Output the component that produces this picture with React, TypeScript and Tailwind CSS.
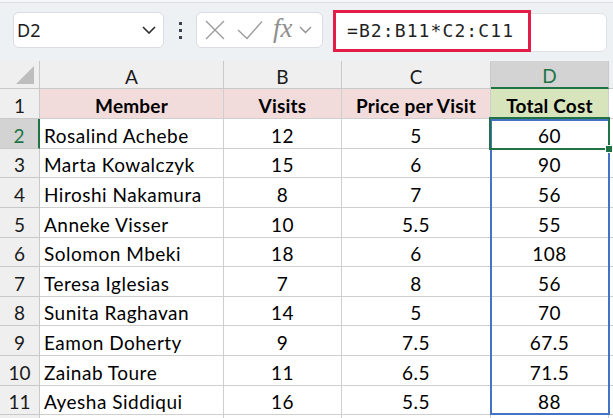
import React from "react";

const rows: [string, string, string, string][] = [
  ["Rosalind Achebe", "12", "5", "60"],
  ["Marta Kowalczyk", "15", "6", "90"],
  ["Hiroshi Nakamura", "8", "7", "56"],
  ["Anneke Visser", "10", "5.5", "55"],
  ["Solomon Mbeki", "18", "6", "108"],
  ["Teresa Iglesias", "7", "8", "56"],
  ["Sunita Raghavan", "14", "5", "70"],
  ["Eamon Doherty", "9", "7.5", "67.5"],
  ["Zainab Toure", "11", "6.5", "71.5"],
  ["Ayesha Siddiqui", "16", "5.5", "88"],
];

const rowH = ["h-[30px]", "h-[29px]", "h-[30px]", "h-[30px]", "h-[29px]", "h-[30px]", "h-[29px]", "h-[30px]", "h-[30px]", "h-[29px]"];

const cellFont = { fontFamily: "Lato, 'Open Sans', sans-serif" };

function Toolbar() {
  return (
    <div className="relative h-[61px] bg-[#eef1f4]" style={{ fontFamily: "'Noto Sans', sans-serif" }}>
      <div className="h-[3px] bg-[#f6f7f9] border-b border-[#dde1e6]" />
      <div className="flex items-start pl-[13px] pt-[9px]">
        {/* Name box */}
        <div className="w-[151px] h-[36px] bg-white border border-[#d9dde3] rounded-[6px] flex items-center justify-between pl-[3px] pr-[7px]">
          <span className="text-[18px] text-[#1b1b1b] leading-none">D2</span>
          <svg width="14" height="8" viewBox="0 0 14 8">
            <path d="M1 1 L7 7 L13 1" fill="none" stroke="#2b2b2b" strokeWidth="1.6" />
          </svg>
        </div>
        {/* dots */}
        <div className="w-[32px] h-[36px] flex flex-col items-center justify-center gap-[4px]">
          <div className="w-[3px] h-[3px] bg-[#3b4350]" />
          <div className="w-[3px] h-[3px] bg-[#3b4350]" />
          <div className="w-[3px] h-[3px] bg-[#3b4350]" />
        </div>
        {/* fx box */}
        <div className="w-[127px] h-[36px] bg-white border border-[#d9dde3] rounded-[6px] flex items-center pl-[8px]">
          <svg width="20" height="20" viewBox="0 0 20 20">
            <path d="M1 1 L19 19 M19 1 L1 19" stroke="#9a9a9a" strokeWidth="1.3" fill="none" />
          </svg>
          <svg width="26" height="20" viewBox="0 0 26 20" className="ml-[12px]">
            <path d="M1 10 L10 18.5 L25 1.5" stroke="#9a9a9a" strokeWidth="1.3" fill="none" />
          </svg>
          <span
            className="ml-[10px] text-[27px] italic text-[#8f8f8f] leading-none -mt-[3px]"
            style={{ fontFamily: "'Liberation Serif', serif" }}
          >
            fx
          </span>
          <svg width="13" height="8" viewBox="0 0 13 8" className="ml-[6px]">
            <path d="M1 1 L6.5 6.5 L12 1" fill="none" stroke="#8f8f8f" strokeWidth="1.3" />
          </svg>
        </div>
        {/* formula input */}
        <div className="ml-[10px] w-[274px] h-[39px] mt-[1px] bg-white border border-[#dde1e6] rounded-[6px]" />
      </div>
      {/* annotation box */}
      <div className="absolute left-[333px] top-[10px] w-[198px] h-[42px] border-[3px] border-[#e11d48] bg-white flex items-center pl-[11px]">
        <span
          className="text-[18px] text-[#1f1f1f] leading-none tracking-[1.1px]"
          style={{ fontFamily: "'DejaVu Sans Mono', monospace" }}
        >
          =B2:B11*C2:C11
        </span>
      </div>
    </div>
  );
}

function Sheet() {
  const hdr = "bg-[#efefef] border-r border-b border-[#c9c9c9] flex items-center justify-center pt-[5px] text-[19px] text-[#1a1a1a]";
  const cell = "border-r border-b border-[#cfcfcf] flex items-center pt-[5px] text-[19px] tracking-[0.5px] text-black bg-white";
  const title = "h-[30px] border-r border-b border-[#cfcfcf] flex items-center justify-center pt-[5px] font-bold text-[19px] tracking-[0.2px]";
  return (
    <div className="relative" style={cellFont}>
      <div className="grid grid-cols-[40px_184px_118px_149px_118px_1fr]">
        {/* column header row */}
        <div className="h-[28px] bg-[#efefef] border-r border-b border-[#c9c9c9] relative">
          <svg width="20" height="20" viewBox="0 0 20 20" className="absolute right-[4px] bottom-[3px]">
            <path d="M19 1 L19 19 L1 19 Z" fill="#bdbdbd" />
          </svg>
        </div>
        <div className={`${hdr} h-[28px]`}>A</div>
        <div className={`${hdr} h-[28px]`}>B</div>
        <div className={`${hdr} h-[28px]`}>C</div>
        <div className="h-[28px] bg-[#d3d3d3] border-r border-[#c9c9c9] border-b-2 border-b-[#217346] flex items-center justify-center pt-[5px] text-[19px] text-[#217346]">D</div>
        <div className="h-[28px] bg-[#eef1f4] border-b border-[#c9c9c9]" />

        {/* row 1 */}
        <div className={`${hdr} h-[30px]`}>1</div>
        <div className={`${title} bg-[#f2dcdb]`}>Member</div>
        <div className={`${title} bg-[#f2dcdb]`}>Visits</div>
        <div className={`${title} bg-[#f2dcdb]`}>Price per Visit</div>
        <div className={`${title} bg-[#d8e4bc]`}>Total Cost</div>
        <div className="h-[30px] bg-white border-b border-[#cfcfcf]" />

        {rows.map((r, i) => {
          const h = rowH[i];
          const selected = i === 0;
          return (
            <React.Fragment key={i}>
              <div
                className={
                  selected
                    ? `${h} bg-[#d3d3d3] border-b border-[#c9c9c9] border-r-2 border-r-[#217346] flex items-center justify-center pt-[5px] text-[19px] text-[#217346]`
                    : `${hdr} ${h}`
                }
              >
                {i + 2}
              </div>
              <div className={`${cell} ${h} pl-[4px]`}>{r[0]}</div>
              <div className={`${cell} ${h} justify-center`}>{r[1]}</div>
              <div className={`${cell} ${h} justify-center`}>{r[2]}</div>
              <div className={`${cell} ${h} justify-center`}>{r[3]}</div>
              <div className={`${h} bg-white border-b border-[#cfcfcf]`} />
            </React.Fragment>
          );
        })}
        <div className="h-[10px] bg-[#efefef] border-r border-[#c9c9c9]" />
        <div className="h-[10px] border-r border-[#cfcfcf]" />
        <div className="h-[10px] border-r border-[#cfcfcf]" />
        <div className="h-[10px] border-r border-[#cfcfcf]" />
        <div className="h-[10px] border-r border-[#cfcfcf]" />
        <div className="h-[10px] bg-white" />
      </div>
      {/* spill range border D2:D11 */}
      <div className="absolute left-[490px] top-[58px] w-[120px] h-[296px] border-2 border-[#4472c4] pointer-events-none" />
      {/* active cell D2 */}
      <div className="absolute left-[489px] top-[56px] w-[121px] h-[33px] border-2 border-[#217346] pointer-events-none" />
      <div className="absolute left-[605px] top-[84px] w-[8px] h-[8px] bg-[#217346] border border-white" />
    </div>
  );
}

export default function App() {
  return (
    <div className="w-[613px] h-[418px] overflow-hidden bg-white">
      <Toolbar />
      <Sheet />
    </div>
  );
}
